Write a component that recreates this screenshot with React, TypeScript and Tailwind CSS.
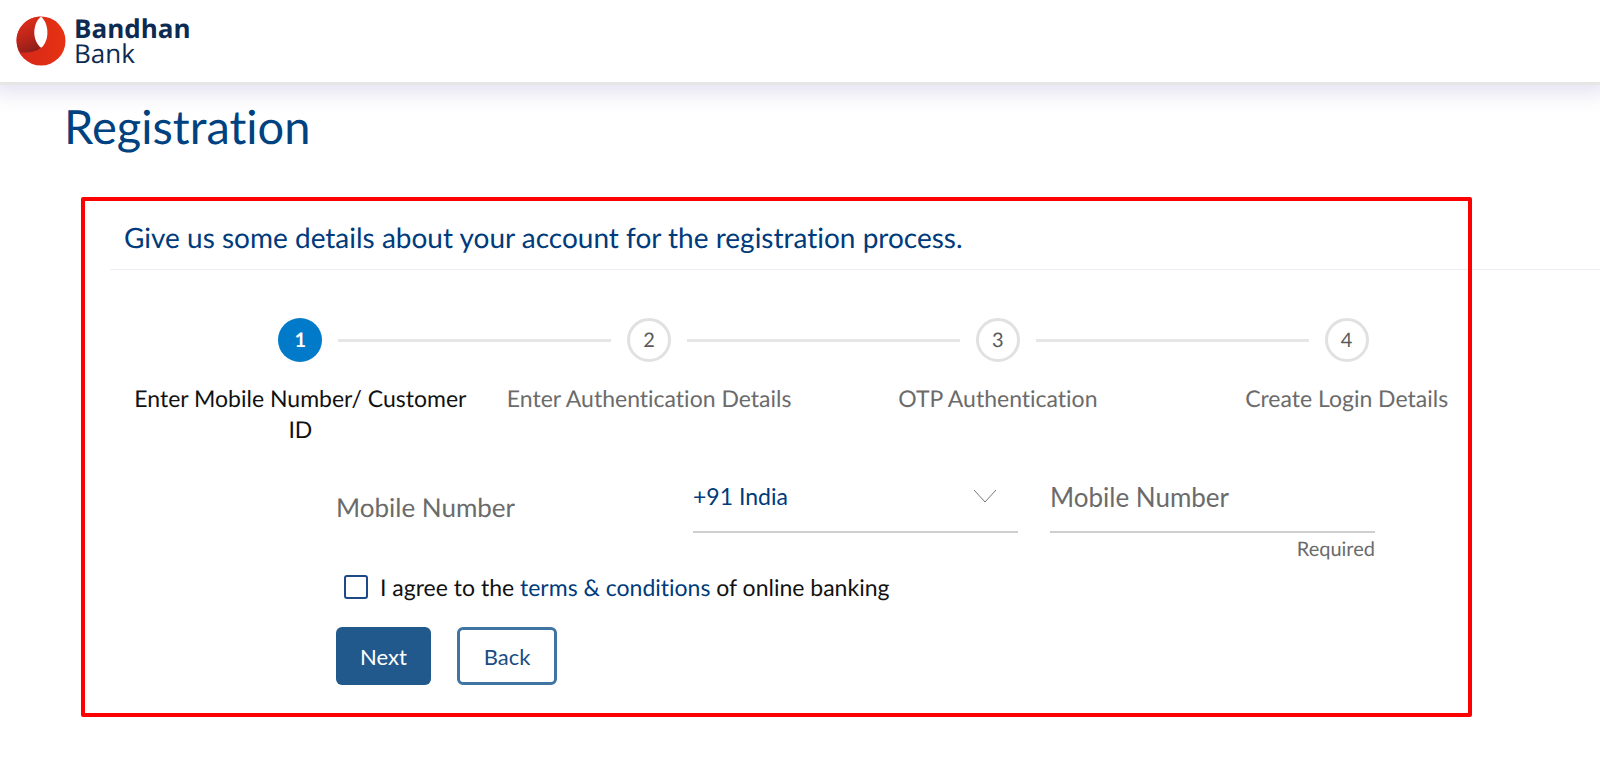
import { useState } from 'react'

const steps = [
  'Enter Mobile Number/ Customer ID',
  'Enter Authentication Details',
  'OTP Authentication',
  'Create Login Details',
]

function Logo() {
  return (
    <div className="flex items-center gap-2">
      <svg viewBox="0 0 50 50" className="size-[50px]" aria-hidden="true">
        <defs>
          <linearGradient id="fold" x1="0.3" y1="0" x2="0.6" y2="1">
            <stop offset="0.1" stopColor="#dc2d1a" />
            <stop offset="0.6" stopColor="#b82419" />
            <stop offset="1" stopColor="#8a1f1b" />
          </linearGradient>
          <linearGradient id="disc" x1="0" y1="0" x2="1" y2="0">
            <stop offset="0" stopColor="#d5261b" />
            <stop offset="1" stopColor="#e63312" />
          </linearGradient>
        </defs>
        <circle cx="25" cy="25" r="24.5" fill="url(#disc)" />
        <path d="M25 0.5C11 0.8 1 11 0.6 24c0 5 1.500 9 3.400 12.500C12 37 20 36 25 31.800 17 25 16 8 25 0.500Z" fill="url(#fold)" />
        <path d="M25 0.500C16 8 16 25 25.200 31.800 33.500 25 33.500 8 25 0.500Z" fill="#fff" />
      </svg>
      <div className="font-['Open_Sans',sans-serif] text-[26px] leading-[25px] text-[#0d2a52]">
        <div className="font-bold">Bandhan</div>
        <div>Bank</div>
      </div>
    </div>
  )
}

function Stepper({ current }: { current: number }) {
  return (
    <ol className="grid grid-cols-4">
      {steps.map((label, i) => (
        <li key={label} className="relative flex flex-col items-center gap-[21px]">
          <span
            className={`flex size-11 items-center justify-center rounded-full text-xl ${
              i === current ? 'bg-[#007ac9] font-bold text-white' : 'border-3 border-[#e0e1e1] text-[#5a5a5a]'
            }`}
          >
            {i + 1}
          </span>
          {i < steps.length - 1 && (
            <span className="absolute top-[21px] left-[calc(50%+38px)] h-[3px] w-[calc(100%-76px)] bg-[#e6e6e6]" />
          )}
          <span
            className={`px-2 text-center text-[23px] leading-[31px] ${i === current ? 'text-[#111]' : 'text-[#6b6b6b]'}`}
          >
            {label}
          </span>
        </li>
      ))}
    </ol>
  )
}

export default function App() {
  const [mobile, setMobile] = useState('')
  const [agreed, setAgreed] = useState(false)

  return (
    <div className="min-h-screen overflow-x-hidden bg-white font-['Lato',sans-serif] [font-variant-ligatures:none] [text-rendering:geometricPrecision]">
      <header className="flex h-[85px] items-center border-b-3 border-[#e6e6e6] px-4 shadow-[0_0_20px_8px_rgba(80,70,160,0.16)]">
        <Logo />
      </header>

      <main>
        <h1 className="px-16 pt-[14px] text-[47px] leading-[56px] text-[#00427f]">Registration</h1>

        <section className="relative mt-[42px] pb-8">
          <h2 className="ml-[110px] border-b border-[#ededf5] px-[14px] pt-[22px] pb-[14px] text-[28px] leading-9 text-[#003b7c]">
            Give us some details about your account for the registration process.
          </h2>

          <div className="mt-12 mr-[79px] ml-[126px]">
            <Stepper current={0} />

            <form className="mt-7 mr-[146px] ml-[210px]" onSubmit={(e) => e.preventDefault()}>
              <div className="grid grid-cols-3 gap-x-8">
                <label htmlFor="mobile" className="pt-[18px] text-[26px] leading-8 text-[#6b6b6b]">
                  Mobile Number
                </label>

                {/* Country code */}
                <div className="relative h-[60px]">
                  <select
                    aria-label="Country code"
                    className="h-[60px] w-full appearance-none border-b-2 border-[#cfcfcf] bg-transparent pb-3 text-[23px] text-[#003b7c] outline-none"
                  >
                    <option>+91 India</option>
                  </select>
                  <svg
                    viewBox="0 0 24 14"
                    className="pointer-events-none absolute top-4 right-[21px] h-[14px] w-6"
                    fill="none"
                    stroke="#777"
                    aria-hidden="true"
                  >
                    <path d="M1 1l11 12L23 1" />
                  </svg>
                </div>

                <div>
                  <input
                    id="mobile"
                    type="tel"
                    value={mobile}
                    onChange={(e) => setMobile(e.target.value)}
                    placeholder="Mobile Number"
                    className="h-[60px] w-full border-b-2 border-[#cfcfcf] pb-[10px] text-[26px] text-[#003b7c] outline-none placeholder:text-[#6b6b6b]"
                  />
                  <p className="mt-0.5 text-right text-xl leading-7 text-[#6b6b6b]">Required</p>
                </div>
              </div>

              <div className="mt-2 flex items-center gap-3 pl-2 text-[23px] leading-8 text-[#111]">
                <input
                  id="agree"
                  type="checkbox"
                  checked={agreed}
                  onChange={(e) => setAgreed(e.target.checked)}
                  className="size-6 appearance-none rounded-[3px] border-2 border-[#1d4a86] checked:bg-[#22598d]"
                />
                <label htmlFor="agree">
                  I agree to the{' '}
                  <a href="#terms" className="text-[#003b7c]">
                    terms &amp; conditions
                  </a>{' '}
                  of online banking
                </label>
              </div>

              <div className="mt-6 flex gap-[26px] text-[22px]">
                <button type="submit" className="h-[58px] rounded-md bg-[#22598d] px-6 text-white">
                  Next
                </button>
                <button type="button" className="h-[58px] rounded-md border-3 border-[#3f74a3] px-6 text-[#1a4c84]">
                  Back
                </button>
              </div>
            </form>
          </div>

          {/* Highlight frame, drawn over the divider */}
          <div className="pointer-events-none absolute inset-y-0 right-32 left-[81px] rounded-xs border-4 border-[#ff0000]" />
        </section>
      </main>
    </div>
  )
}
